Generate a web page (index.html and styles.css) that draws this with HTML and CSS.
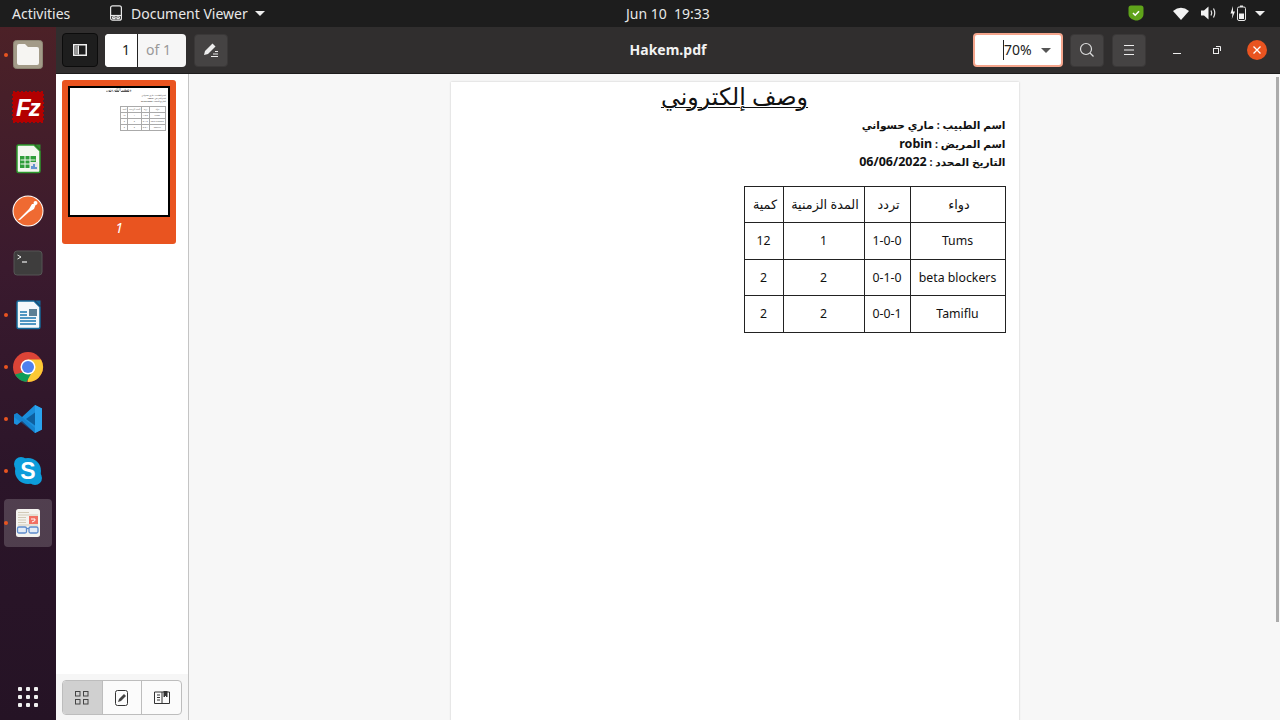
FILE: index.html
```html
<!DOCTYPE html>
<html lang="en">

<head>
    <meta charset="UTF-8">
    <meta name="viewport" content="width=device-width, initial-scale=1.0">
    <title>Hakem.pdf - Document Viewer</title>
    <link rel="stylesheet" href="styles.css">
</head>

<body>
    <!-- top bar of the desktop -->
    <div class="topbar">
        <div class="topbar-left">
            <span class="activities">Activities</span>
            <span class="app-menu">
                <svg width="16" height="16" viewBox="0 0 16 16" fill="none" stroke="#e8e8e8" stroke-width="1.2">
                    <rect x="2.6" y="0.8" width="10.8" height="14.4" rx="2"/>
                    <path d="M3 10.5h10"/>
                    <rect x="4.6" y="11.8" width="2.6" height="1.8" rx=".5"/>
                    <rect x="8.8" y="11.8" width="2.6" height="1.8" rx=".5"/>
                </svg>
                Document Viewer
                <i class="tri"></i>
            </span>
        </div>
        <div class="clock">Jun 10&nbsp;&nbsp;19:33</div>
        <div class="tray">
            <svg class="tray-shield" width="16" height="16" viewBox="0 0 16 16">
                <path d="M3 .5h10Q15.500 .5 15.500 3V9Q15.500 13 11 15 8.500 16 6 15 .5 13 .5 9V3Q.5 .5 3 .5Z" fill="#5fa31a"/>
                <path d="M5 8l2.200 2.200L11 6.300" fill="none" stroke="#fff" stroke-width="1.600"/>
            </svg>
            <svg class="tray-wifi" width="16" height="13" viewBox="0 0 16 13">
                <path d="M0 4Q8 -2.500 16 4L8 13Z" fill="#f2f2f2"/>
            </svg>
            <svg class="tray-vol" width="16" height="14" viewBox="0 0 16 14" fill="none" stroke="#e8e8e8">
                <path d="M0 4.500h3L7.500 .5v13L3 9.500H0Z" fill="#f2f2f2" stroke="none"/>
                <path d="M10 4.500Q11.500 7 10 9.500M12.500 2.500Q15 7 12.500 11.500" stroke-width="1.200"/>
            </svg>
            <svg class="tray-batt" width="16" height="16" viewBox="0 0 16 16">
                <path d="M3 1L.5 8.500h2L1.800 14 5 6.500H3Z" fill="#f2f2f2"/>
                <rect x="7.500" y="2" width="8" height="13.500" rx="1.500" fill="none" stroke="#e8e8e8"/>
                <rect x="10" y=".5" width="3" height="1.500" fill="#e8e8e8"/>
                <rect x="9" y="8.500" width="5" height="5.500" fill="#f2f2f2"/>
            </svg>
            <i class="tri"></i>
        </div>
    </div>

    <div class="below">
        <!-- launcher -->
        <div class="dock">
            <div class="dock-item running">
                <svg width="32" height="32" viewBox="0 0 32 32">
                    <rect x="1.500" y="1.500" width="29" height="28" rx="3" fill="#a39b88" stroke="#8c8573"/>
                    <path d="M5 7Q5 5 7 5H13L16 8H25Q27 8 27 10V24Q27 26 25 26H7Q5 26 5 24Z" fill="#f6f5f2"/>
                </svg>
            </div>
            <div class="dock-item">
                <svg width="32" height="32" viewBox="0 0 32 32">
                    <rect x="1" y="1" width="30" height="30" fill="#b30000" stroke="#b30000" stroke-width="2" stroke-dasharray="2 2"/>
                    <text x="4" y="25" class="fz-text">Fz</text>
                </svg>
            </div>
            <div class="dock-item">
                <svg width="32" height="32" viewBox="0 0 32 32">
                    <path d="M5 3.500Q5 2 6.500 2H22L28 8V28Q28 29.500 26.500 29.500H6.500Q5 29.500 5 28Z" fill="#f4f8f0" stroke="#2c9a2c" stroke-width="1.500"/>
                    <path d="M23 1.500L28.500 7V1.500Z" fill="#2f8f2f"/>
                    <path d="M8 13h16v12H8Z" fill="#2f9e3a"/>
                    <path d="M8.500 17h15M8.500 21h15M13 13v12M18 13v12" stroke="#f4f8f0"/>
                    <rect x="18" y="19" width="8" height="8" fill="#e6e6e6"/>
                    <path d="M20 26v-3M22 26v-5M24 26v-2" stroke="#3a7ac8" stroke-width="1.500"/>
                </svg>
            </div>
            <div class="dock-item">
                <svg width="32" height="32" viewBox="0 0 32 32">
                    <circle cx="16" cy="16" r="15.500" fill="#fff"/>
                    <circle cx="16" cy="16" r="14.500" fill="#ef6a32"/>
                    <path d="M6 25L17 14 20 9 24 9 22 14 17 17 8 25Z" fill="#fff"/>
                    <circle cx="23.500" cy="8" r="2" fill="#fff"/>
                </svg>
            </div>
            <div class="dock-item">
                <svg width="32" height="32" viewBox="0 0 32 32">
                    <rect x="2" y="4" width="28" height="24" rx="3" fill="#3e3d3d" stroke="#555"/>
                    <path d="M5.500 8l3.500 2-3.500 2" fill="none" stroke="#eee"/>
                    <path d="M10 15h5" stroke="#eee" stroke-width="1.200"/>
                </svg>
            </div>
            <div class="dock-item running">
                <svg width="32" height="32" viewBox="0 0 32 32">
                    <path d="M5 3.500Q5 2 6.500 2H22L28 8V28Q28 29.500 26.500 29.500H6.500Q5 29.500 5 28Z" fill="#f4f8fb" stroke="#14699b" stroke-width="1.500"/>
                    <path d="M23 1.500L28.500 7V1.500Z" fill="#14699b"/>
                    <path d="M8 13h7M8 16h7M8 19h16M8 22h16M8 25h16" stroke="#1a76b0" stroke-width="1.500"/>
                    <rect x="17" y="10" width="8" height="7" fill="#5b7f95"/>
                </svg>
            </div>
            <div class="dock-item running">
                <svg width="32" height="32" viewBox="0 0 32 32">
                    <circle cx="16" cy="16" r="15" fill="#db4437"/>
                    <path d="M16 31A15 15 0 0 0 29 8.500L16 8.500L16 16Z" fill="#fcc934"/>
                    <path d="M3 23.500A15 15 0 0 0 14.500 31L20 21 12 21Z" fill="#0f9d58"/>
                    <circle cx="16" cy="16" r="7.500" fill="#fff"/>
                    <circle cx="16" cy="16" r="6" fill="#4e80ee"/>
                </svg>
            </div>
            <div class="dock-item running">
                <svg width="32" height="32" viewBox="0 0 32 32">
                    <path d="M23 2L30 5.500V26.500L23 30 10 18 5 22 2 20.500V11.500L5 10 10 14Z" fill="#1b8fdc"/>
                    <path d="M23 9.500L14 16 23 22.500Z" fill="#0e5f9e"/>
                    <path d="M23 2L30 5.500V26.500L23 30Z" fill="#2aa3ee"/>
                    <path d="M2 11.500L5 10 23 25V30L2 14Z" fill="#0f76c0" opacity=".5"/>
                </svg>
            </div>
            <div class="dock-item running">
                <svg width="32" height="32" viewBox="0 0 32 32">
                    <circle cx="16" cy="16" r="13" fill="#0d9ddb"/>
                    <circle cx="9" cy="9" r="7" fill="#0d9ddb"/>
                    <circle cx="23" cy="23" r="7" fill="#0d9ddb"/>
                    <text x="16" y="24" class="skype-text">S</text>
                </svg>
            </div>
            <div class="dock-item running active">
                <svg width="32" height="32" viewBox="0 0 32 32">
                    <rect x="4" y="2" width="24" height="28" rx="2.500" fill="#f2f1ec"/>
                    <path d="M6 5.500h11M6 8h20M6 10.500h8M6 13h8M6 15.500h8M6 18h20" stroke="#c9bfa8"/>
                    <rect x="17" y="9" width="9" height="8" fill="#ee5040"/>
                    <path d="M19 12h4q1 2-3 3" fill="none" stroke="#fff"/>
                    <rect x="5.500" y="20" width="9" height="6" rx="1.500" fill="#dfe8f4" stroke="#3a72c0" stroke-width="1.300"/>
                    <rect x="17" y="20" width="9" height="6" rx="1.500" fill="#dfe8f4" stroke="#3a72c0" stroke-width="1.300"/>
                    <path d="M14.500 21.500h2.500" stroke="#3a72c0" stroke-width="1.300"/>
                </svg>
            </div>
            <div class="dock-grid">
                <i></i><i></i><i></i><i></i><i></i><i></i><i></i><i></i><i></i>
            </div>
        </div>

        <div class="window">
            <div class="header">
                <div class="header-left">
                    <div class="tool-btn toggled">
                        <svg width="14" height="12" viewBox="0 0 14 12">
                            <path d="M0 0h14v12H0ZM1.500 1.500v9h11v-9Z" fill="#f0f0f0" fill-rule="evenodd"/>
                            <rect x="1.500" y="1.500" width="3.500" height="9" fill="#9a9a9a"/>
                            <rect x="5" y="1.500" width="1" height="9" fill="#f0f0f0"/>
                        </svg>
                    </div>
                    <div class="page-entry">
                        <span class="page-num">1</span>
                        <span class="page-of">of 1</span>
                    </div>
                    <div class="tool-btn annotate">
                        <svg width="16" height="14" viewBox="0 0 16 14">
                            <path d="M1 12l1-4L9.500 .5l3 3L5 11Z" fill="#eee"/>
                            <path d="M8 13.500h7M10 11h5M12 8.500h3" stroke="#eee"/>
                        </svg>
                    </div>
                </div>
                <div class="title">Hakem.pdf</div>
                <div class="header-right">
                    <div class="zoom-box">
                        <span class="zoom-val">70%</span>
                        <i class="tri tri-grey"></i>
                    </div>
                    <div class="tool-btn">
                        <svg width="16" height="16" viewBox="0 0 16 16" fill="none" stroke="#ddd" stroke-width="1.200">
                            <circle cx="7" cy="7" r="5.500"/>
                            <path d="M11 11l3.500 3.500"/>
                        </svg>
                    </div>
                    <div class="tool-btn menu-btn">
                        <svg width="12" height="10" viewBox="0 0 12 10" stroke="#eee">
                            <path d="M1 .5h10M1 5h10M1 9.500h10"/>
                        </svg>
                    </div>
                    <div class="win-btns">
                        <div class="win-btn">
                            <svg width="10" height="10" viewBox="0 0 10 10" stroke="#eee"><path d="M1 8.500h8"/></svg>
                        </div>
                        <div class="win-btn">
                            <svg width="10" height="10" viewBox="0 0 10 10" fill="none" stroke="#eee">
                                <rect x="1.500" y="3.500" width="5" height="5"/>
                                <path d="M4 1.500h4.500V6"/>
                            </svg>
                        </div>
                        <div class="win-btn">
                            <span class="close-circle">
                                <svg width="10" height="10" viewBox="0 0 10 10" stroke="#fff" stroke-width="1.300"><path d="M1.500 1.500l7 7M8.500 1.500l-7 7"/></svg>
                            </span>
                        </div>
                    </div>
                </div>
            </div>

            <div class="content">
                <div class="sidebar">
                    <div class="thumbs">
                        <div class="thumb">
                            <div class="thumb-page">
                                <div class="page" dir="rtl">
                                    <h1>وصف إلكتروني</h1>
                                    <div class="info">
                                        <div>اسم الطبيب : ماري حسواني</div>
                                        <div>اسم المريض : <span class="lat">robin</span></div>
                                        <div>التاريخ المحدد : <span class="lat">06/06/2022</span></div>
                                    </div>
                                    <table>
                                        <tr><th class="c1">دواء</th><th class="c2">تردد</th><th class="c3">المدة الزمنية</th><th class="c4">كمية</th></tr>
                                        <tr><td>Tums</td><td>1-0-0</td><td>1</td><td>12</td></tr>
                                        <tr><td>beta blockers</td><td>0-1-0</td><td>2</td><td>2</td></tr>
                                        <tr><td>Tamiflu</td><td>0-0-1</td><td>2</td><td>2</td></tr>
                                    </table>
                                </div>
                            </div>
                            <div class="thumb-label">1</div>
                        </div>
                    </div>
                    <div class="side-footer">
                        <div class="segmented">
                            <div class="seg selected">
                                <svg width="14" height="14" viewBox="0 0 14 14" fill="none" stroke="#444">
                                    <rect x=".5" y=".5" width="4.500" height="4.500"/>
                                    <rect x="8.500" y=".5" width="4.500" height="4.500"/>
                                    <rect x=".5" y="8.500" width="4.500" height="4.500"/>
                                    <rect x="8.500" y="8.500" width="4.500" height="4.500"/>
                                </svg>
                            </div>
                            <div class="seg">
                                <svg width="14" height="16" viewBox="0 0 14 16">
                                    <rect x=".5" y=".5" width="12" height="15" rx="2" fill="none" stroke="#333"/>
                                    <path d="M3 12l1-3 5-5 2 2-5 5Z" fill="#444"/>
                                </svg>
                            </div>
                            <div class="seg">
                                <svg width="16" height="14" viewBox="0 0 16 14" fill="none" stroke="#333">
                                    <path d="M.5 1h15v11.500H.5ZM8 1v11.500"/>
                                    <path d="M3 4h3M3 6.500h3M3 9h3"/>
                                    <path d="M10 0h3v6l-1.500-1.500L10 6Z" fill="#333"/>
                                </svg>
                            </div>
                        </div>
                    </div>
                </div>

                <div class="viewer">
                    <div class="page main-page" dir="rtl">
                        <h1>وصف إلكتروني</h1>
                        <div class="info">
                            <div>اسم الطبيب : ماري حسواني</div>
                            <div>اسم المريض : <span class="lat">robin</span></div>
                            <div>التاريخ المحدد : <span class="lat">06/06/2022</span></div>
                        </div>
                        <table>
                            <tr><th class="c1">دواء</th><th class="c2">تردد</th><th class="c3">المدة الزمنية</th><th class="c4">كمية</th></tr>
                            <tr><td>Tums</td><td>1-0-0</td><td>1</td><td>12</td></tr>
                            <tr><td>beta blockers</td><td>0-1-0</td><td>2</td><td>2</td></tr>
                            <tr><td>Tamiflu</td><td>0-0-1</td><td>2</td><td>2</td></tr>
                        </table>
                    </div>
                    <div class="scrollbar"></div>
                </div>
            </div>
        </div>
    </div>
</body>

</html>
```

FILE: styles.css
```css
* {
    box-sizing: border-box;
}

html,
body {
    margin: 0;
    width: 1280px;
    height: 720px;
    overflow: hidden;
}

body {
    display: flex;
    flex-direction: column;
    font-family: "Noto Sans", "DejaVu Sans", sans-serif;
    font-size: 14px;
}

.tri {
    width: 0;
    height: 0;
    border-left: 5px solid transparent;
    border-right: 5px solid transparent;
    border-top: 5px solid #eee;
}

/* top bar */
.topbar {
    height: 27px;
    flex: none;
    padding-bottom: 1px;
    display: flex;
    align-items: center;
    background-color: #1d1d1d;
    color: #e8e8e8;
}

.topbar-left {
    width: 626px;
    flex: none;
    padding-left: 12px;
    display: flex;
    align-items: center;
}

.activities {
    width: 96px;
}

.app-menu {
    display: flex;
    align-items: center;
    gap: 7px;
}

.clock {
    font-size: 14px;
}

.tray {
    margin-left: auto;
    padding-right: 15px;
    display: flex;
    align-items: center;
}

.tray-shield {
    margin-right: 29px;
}

.tray-wifi {
    margin-right: 12px;
}

.tray-vol {
    margin-right: 13px;
}

.tray-batt {
    margin-right: 9px;
}

.below {
    flex: 1;
    display: flex;
    min-height: 0;
}

/* launcher */
.dock {
    width: 56px;
    flex: none;
    padding-top: 2px;
    display: flex;
    flex-direction: column;
    background: linear-gradient(180deg, #4c2127 0%, #3a1a2e 35%, #2b1529 65%, #251325 100%);
}

.dock-item {
    height: 52px;
    flex: none;
    display: flex;
    align-items: center;
    justify-content: center;
    position: relative;
}

.dock-item.running::before {
    content: "";
    position: absolute;
    left: 4px;
    top: 24px;
    width: 4px;
    height: 4px;
    border-radius: 50%;
    background-color: #e95420;
    z-index: 1;
}

.dock-item.active::after {
    content: "";
    position: absolute;
    left: 4px;
    top: 2px;
    width: 48px;
    height: 48px;
    border-radius: 4px;
    background-color: rgba(255, 255, 255, .18);
}

.fz-text {
    font-family: "Liberation Sans", sans-serif;
    font-weight: bold;
    font-style: italic;
    font-size: 24px;
    letter-spacing: -2px;
    fill: #fff;
}

.skype-text {
    font-family: "Liberation Sans", sans-serif;
    font-weight: bold;
    font-size: 23px;
    fill: #fff;
    text-anchor: middle;
}

.dock-grid {
    margin-top: auto;
    height: 46px;
    padding: 13px 16px 13px 18px;
    display: grid;
    grid-template-columns: repeat(3, 4px);
    grid-auto-rows: 4px;
    gap: 4px;
}

.dock-grid i {
    background-color: #f0f0f0;
    border-radius: 1px;
}

/* window */
.window {
    flex: 1;
    min-width: 0;
    display: flex;
    flex-direction: column;
}

.header {
    height: 47px;
    flex: none;
    display: grid;
    grid-template-columns: 1fr auto 1fr;
    align-items: center;
    background-color: #302e2e;
    border-bottom: 1px solid #1d1c1c;
}

.header-left {
    padding-left: 6px;
    display: flex;
    align-items: center;
}

.header-right {
    display: flex;
    align-items: center;
    justify-content: flex-end;
    padding-right: 3px;
}

.title {
    color: #f2f2f2;
    font-weight: 700;
    font-size: 14px;
    margin-bottom: 1px;
}

.tool-btn {
    width: 34px;
    height: 33px;
    display: flex;
    align-items: center;
    justify-content: center;
    border-radius: 4px;
    background-color: #454343;
    border: 1px solid #3a3838;
    margin-left: 7px;
}

.toggled {
    width: 36px;
    height: 34px;
    margin-left: 0;
    background-color: #1e1e1e;
    border-color: #0c0c0c;
}

.annotate {
    margin-left: 8px;
}

.menu-btn {
    margin-left: 8px;
}

.page-entry {
    width: 81px;
    height: 33px;
    margin-left: 7px;
    display: flex;
    border-radius: 4px;
    overflow: hidden;
    background-color: #f6f6f6;
}

.page-num {
    width: 33px;
    padding-right: 7px;
    line-height: 32px;
    text-align: right;
    color: #222;
    background-color: #fff;
    border-right: 1px solid #222;
}

.page-of {
    flex: 1;
    line-height: 32px;
    padding-left: 8px;
    color: #999;
}

.zoom-box {
    width: 90px;
    height: 34px;
    padding-left: 28px;
    display: flex;
    align-items: center;
    background-color: #fff;
    border: 2px solid #f4a58c;
    border-radius: 4px;
    color: #222;
}

.zoom-val {
    border-left: 1px solid #222;
    line-height: 20px;
    width: 38px;
}

.tri-grey {
    border-top-color: #555;
}

.win-btns {
    display: flex;
    margin-left: 11px;
}

.win-btn {
    width: 40px;
    height: 34px;
    display: flex;
    align-items: center;
    justify-content: center;
}

.close-circle {
    width: 20px;
    height: 20px;
    display: flex;
    align-items: center;
    justify-content: center;
    border-radius: 50%;
    background-color: #e95420;
}

.content {
    flex: 1;
    min-height: 0;
    display: flex;
}

/* sidebar */
.sidebar {
    width: 133px;
    flex: none;
    display: flex;
    flex-direction: column;
    background-color: #fff;
    border-right: 1px solid #c4c4c4;
}

.thumbs {
    flex: 1;
    padding: 6px 6px 0;
}

.thumb {
    width: 114px;
    height: 164px;
    padding: 6px 6px 0;
    background-color: #e95420;
    border-radius: 3px;
}

.thumb-page {
    width: 102px;
    height: 131px;
    overflow: hidden;
    background-color: #fff;
    border: 2px solid #000;
}

.thumb-label {
    padding-top: 1px;
    text-align: center;
    font-style: italic;
    color: #fff;
}

.side-footer {
    height: 46px;
    flex: none;
    padding: 6px 5px 0 6px;
    background-color: #f6f6f6;
}

.segmented {
    width: 120px;
    height: 35px;
    display: flex;
    background-color: #fbfbfb;
    border: 1px solid #bdbdbd;
    border-radius: 4px;
    overflow: hidden;
}

.seg {
    flex: 1;
    display: flex;
    align-items: center;
    justify-content: center;
    border-right: 1px solid #bdbdbd;
}

.seg:last-child {
    border-right: 0;
}

.seg.selected {
    background-color: #d0d0d0;
}

/* document view */
.viewer {
    flex: 1;
    min-width: 0;
    padding-top: 8px;
    display: flex;
    justify-content: center;
    position: relative;
    overflow: hidden;
    background-color: #f7f7f7;
}

.page {
    padding-right: 13px;
    background-color: #fff;
    color: #111;
}

.main-page {
    width: 568px;
    height: 720px;
    flex: none;
    box-shadow: 0 0 2px rgba(0, 0, 0, .2);
}

.page h1 {
    margin: 0 -13px 0 0;
    font-size: 23.700px;
    font-weight: normal;
    line-height: 28px;
    text-align: center;
    text-decoration: underline;
    text-underline-offset: 2px;
    text-decoration-thickness: 1px;
}

.info {
    margin-top: 6px;
    font-size: 10.600px;
    font-weight: 700;
    line-height: 18.500px;
}

.lat {
    font-size: 12.500px;
}

.page table {
    margin-top: 14px;
    width: 261px;
    table-layout: fixed;
    border-collapse: collapse;
    font-size: 12.300px;
}

.page th,
.page td {
    height: 36.500px;
    padding: 0;
    text-align: center;
    font-weight: normal;
    border: 1px solid #222;
}

.page th {
    padding-left: 3px;
    font-size: 12.800px;
}

.c1 {
    width: 95px;
}

.c2 {
    width: 46px;
}

.c3 {
    width: 81px;
}

.c4 {
    width: 39px;
}

/* the page again, small, inside the thumbnail */
.thumb-page .page {
    zoom: .17;
    width: 100%;
    height: 100%;
    color: #555;
}

.thumb-page .page th,
.thumb-page .page td {
    border-color: #aaa;
}

.scrollbar {
    position: absolute;
    top: 3px;
    right: 1px;
    width: 3px;
    height: 545px;
    background-color: #ababab;
}
```
